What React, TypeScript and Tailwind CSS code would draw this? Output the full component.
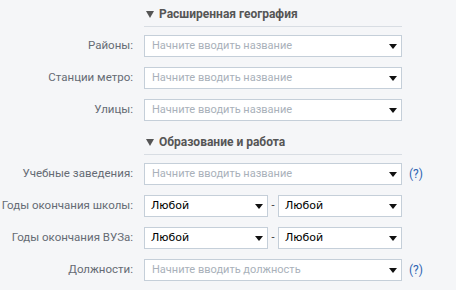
import type { ReactNode } from 'react'

const Arrow = () => (
	<svg width="8" height="5" viewBox="0 0 8 5" className="shrink-0">
		<path d="M0 0 H8 L4 5 Z" fill="#111" />
	</svg>
)

const SectionHeader = ({ title }: { title: string }) => (
	<div className="flex">
		<div className="w-[144px] shrink-0" />
		<div className="w-[258px] border-b border-[#d8dde3] pb-[4px]">
			<div className="flex items-center gap-[5px] h-[16px] pl-[2px] font-bold text-[12px] text-[#555]">
				<svg width="8" height="7" viewBox="0 0 8 7">
					<path d="M0 0 H8 L4 7 Z" fill="#555" />
				</svg>
				<span>{title}</span>
			</div>
		</div>
	</div>
)

const Row = ({
	label,
	children,
	help
}: {
	label: string
	children: ReactNode
	help?: boolean
}) => (
	<div className="flex items-center h-[22px]">
		<div className="w-[134px] shrink-0 text-right text-[11.5px] text-[#656b74] pr-[1px] whitespace-nowrap">
			{label}
		</div>
		<div className="w-[10px] shrink-0" />
		<div className="w-[258px] shrink-0 flex items-center h-full">{children}</div>
		{help && (
			<span className="ml-[7px] text-[12px] text-[#2d64b3]">(?)</span>
		)}
	</div>
)

const Combo = ({ placeholder }: { placeholder: string }) => (
	<div className="flex items-center w-full h-full bg-white border border-[#c5cfd9] pl-[7px] pr-[4px]">
		<span className="flex-1 text-[11px] text-[#a9b1ba]">{placeholder}</span>
		<Arrow />
	</div>
)

const YearSelect = () => (
	<div className="flex items-center w-[124px] h-full bg-white border border-[#c5cfd9] pl-[6px] pr-[4px]">
		<span className="flex-1 text-[11px] text-black font-['DejaVu_Sans',sans-serif]">
			Любой
		</span>
		<Arrow />
	</div>
)

const YearRange = () => (
	<div className="flex items-center w-full h-full">
		<YearSelect />
		<span className="w-[10px] text-center text-[11px] text-[#333]">-</span>
		<YearSelect />
	</div>
)

export default function App() {
	return (
		<div className="w-[456px] h-[290px] bg-[#f5f6f8] font-['Roboto',Arial,sans-serif] pt-[6px]">
			<SectionHeader title="Расширенная география" />
			<div className="flex flex-col gap-[10px] mt-[8px]">
				<Row label="Районы:">
					<Combo placeholder="Начните вводить название" />
				</Row>
				<Row label="Станции метро:">
					<Combo placeholder="Начните вводить название" />
				</Row>
				<Row label="Улицы:">
					<Combo placeholder="Начните вводить название" />
				</Row>
			</div>
			<div className="mt-[13px]">
				<SectionHeader title="Образование и работа" />
			</div>
			<div className="flex flex-col gap-[10px] mt-[8px]">
				<Row label="Учебные заведения:" help>
					<Combo placeholder="Начните вводить название" />
				</Row>
				<Row label="Годы окончания школы:">
					<YearRange />
				</Row>
				<Row label="Годы окончания ВУЗа:">
					<YearRange />
				</Row>
				<Row label="Должности:" help>
					<Combo placeholder="Начните вводить должность" />
				</Row>
			</div>
		</div>
	)
}
